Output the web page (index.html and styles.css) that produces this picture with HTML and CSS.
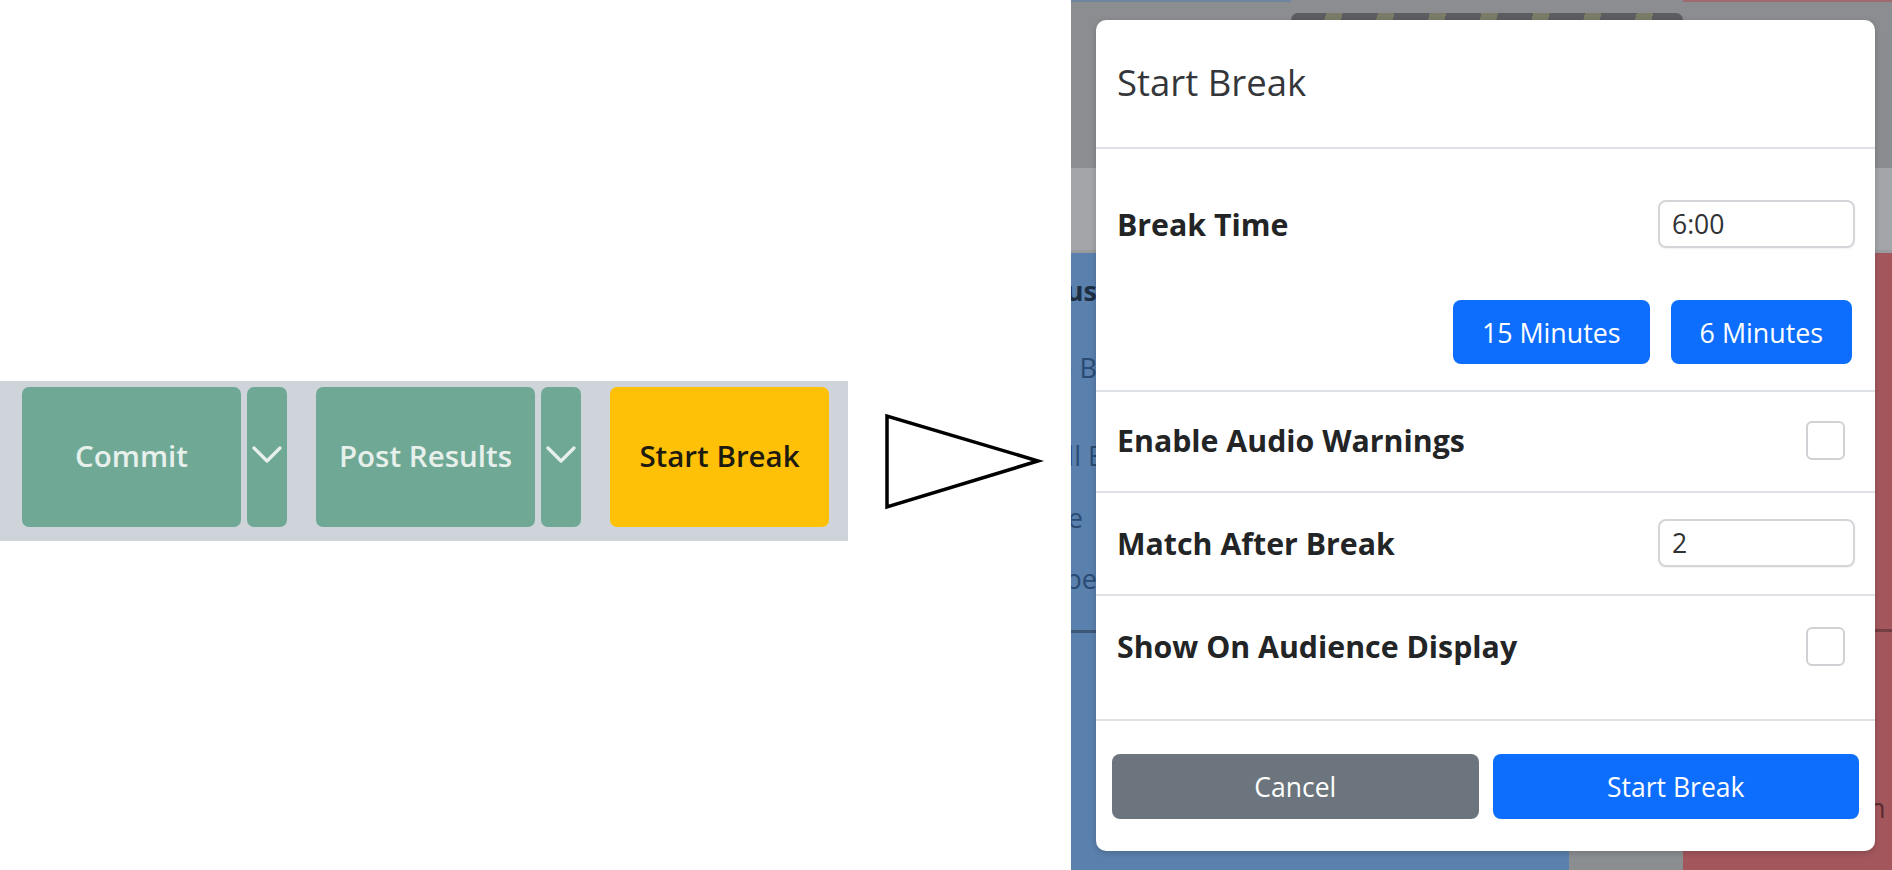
FILE: index.html
```html
<!DOCTYPE html>
<html lang="en">
<head>
<meta charset="utf-8">
<title>Start Break</title>
<link rel="stylesheet" href="styles.css">
</head>
<body>
<div class="page">
  <section class="left">
    <div class="toolbar">
      <button class="tb-btn tb-green tb-main">Commit</button>
      <button class="tb-btn tb-green tb-drop" aria-label="More">
        <svg width="30" height="18" viewBox="0 0 30 18"><polyline points="2,2 15,15 28,2" fill="none" stroke="#e7f0eb" stroke-width="3.2" stroke-linecap="round" stroke-linejoin="round"/></svg>
      </button>
      <button class="tb-btn tb-green tb-main tb-gap">Post Results</button>
      <button class="tb-btn tb-green tb-drop" aria-label="More">
        <svg width="30" height="18" viewBox="0 0 30 18"><polyline points="2,2 15,15 28,2" fill="none" stroke="#e7f0eb" stroke-width="3.2" stroke-linecap="round" stroke-linejoin="round"/></svg>
      </button>
      <button class="tb-btn tb-yellow tb-main tb-gap">Start Break</button>
    </div>
  </section>

  <div class="arrow">
    <svg width="223" height="870" viewBox="0 0 223 870">
      <polygon points="39,416 39,507 190,461" fill="#ffffff" stroke="#000000" stroke-width="3.5" stroke-linejoin="miter"/>
    </svg>
  </div>

  <section class="backdrop">
    <div class="under">
      <div class="under-topline">
        <span class="tl-blue"></span><span class="tl-gray"></span><span class="tl-red"></span>
      </div>
      <div class="under-top">
        <div class="striped"></div>
      </div>
      <div class="under-band"></div>
      <div class="under-cols">
        <div class="col-blue">
          <div class="ul ul-1"><span>Status</span></div>
          <div class="ul ul-2"><span>to B</span></div>
          <div class="ul ul-3"><span>Fill E</span></div>
          <div class="ul ul-4"><span>e</span></div>
          <div class="ul ul-5"><span>Type</span></div>
          <div class="col-line"></div>
        </div>
        <div class="col-gray"></div>
        <div class="col-red">
          <div class="col-line red-line"></div>
          <div class="red-text">n</div>
        </div>
      </div>
    </div>

    <div class="modal">
      <header class="modal-header">
        <h5 class="modal-title">Start Break</h5>
      </header>
      <div class="modal-body">
        <div class="section first">
          <div class="row">
            <label class="lbl">Break Time</label>
            <input class="field" type="text" value="6:00">
          </div>
          <div class="presets">
            <button class="btn btn-primary preset">15 Minutes</button>
            <button class="btn btn-primary preset">6 Minutes</button>
          </div>
        </div>
        <div class="section s2">
          <div class="row">
            <label class="lbl">Enable Audio Warnings</label>
            <span class="check"></span>
          </div>
        </div>
        <div class="section s3">
          <div class="row">
            <label class="lbl">Match After Break</label>
            <input class="field" type="text" value="2">
          </div>
        </div>
        <div class="section last">
          <div class="row">
            <label class="lbl">Show On Audience Display</label>
            <span class="check"></span>
          </div>
        </div>
      </div>
      <footer class="modal-footer">
        <button class="btn btn-secondary">Cancel</button>
        <button class="btn btn-primary">Start Break</button>
      </footer>
    </div>
  </section>
</div>
</body>
</html>
```

FILE: styles.css
```css
* { box-sizing: border-box; }
html, body { margin: 0; padding: 0; background: #ffffff; }
body { font-family: "Open Sans", "Noto Sans", sans-serif; width: 1892px; height: 870px; overflow: hidden; }

.page { display: flex; align-items: flex-start; width: 1892px; height: 870px; }

/* ---------- left toolbar ---------- */
.left { width: 848px; flex: none; padding-top: 381px; }
.toolbar {
  height: 160px;
  background: #cfd4da;
  display: flex;
  align-items: flex-start;
  padding: 6px 0 0 22px;
  gap: 6px;
}
.tb-btn {
  height: 140px;
  border: none;
  border-radius: 7px;
  font-family: "Open Sans", sans-serif;
  font-size: 29.5px;
  font-weight: 600;
  letter-spacing: 0;
  display: flex;
  align-items: center;
  justify-content: center;
  padding: 0 0 4px;
}
.tb-green { background: #6fa996; color: #e7f0eb; }
.tb-yellow { background: #ffc107; color: #1d1a10; }
.tb-main { width: 219px; }
.tb-drop { width: 40px; }
.tb-gap { margin-left: 23px; }

.arrow { width: 223px; flex: none; height: 870px; }
.arrow svg { display: block; }

/* ---------- backdrop (page underneath) ---------- */
.backdrop {
  position: relative;
  flex: 1;
  height: 870px;
  overflow: hidden;
  background: #8b8d90;
}
.under { display: flex; flex-direction: column; height: 870px; }
.under-topline { display: flex; height: 2px; }
.tl-blue { width: 220px; background: #6f86a3; }
.tl-gray { width: 392px; background: #8b8d90; }
.tl-red { flex: 1; background: #9d6a6e; }
.under-top { height: 166px; padding: 11px 0 0 220px; }
.striped {
  width: 392px;
  height: 14px;
  border-radius: 7px;
  background: repeating-linear-gradient(105deg, #5b5d60 0 34px, #7b7c68 34px 50px);
}
.under-band { height: 85px; background: #a3a5a8; border-bottom: 3px solid #999b9e; }
.under-cols { flex: 1; display: flex; }
.col-blue {
  width: 498px;
  background: #5a80ad;
  color: #2b4b74;
  font-size: 27px;
  line-height: 36px;
  white-space: nowrap;
  display: flex;
  flex-direction: column;
  padding-top: 20px;
}
.ul { display: flex; justify-content: flex-end; font-family: "Open Sans", sans-serif; }
.ul-1 { width: 26px; font-weight: 700; color: #1e2f45; }
.ul-2 { width: 26px; margin-top: 41px; }
.ul-3 { width: 32px; margin-top: 52px; }
.ul-4 { width: 12px; margin-top: 26px; }
.ul-5 { width: 26px; margin-top: 25px; }
.col-line { height: 3px; background: #3d5775; margin-top: 33px; width: 100%; }
.col-gray { width: 114px; background: #8b8e91; }
.col-red { flex: 1; background: #a3575d; padding-top: 376px; }
.red-line { background: #743e43; margin-top: 0; }
.red-text { color: #5b2a2e; font-size: 27px; margin-top: 161px; padding-left: 186px; line-height: 30px; }

/* ---------- modal ---------- */
.modal {
  position: absolute;
  left: 25px;
  top: 20px;
  width: 779px;
  height: 831px;
  background: #ffffff;
  border-radius: 10px;
  box-shadow: 0 2px 6px rgba(0,0,0,0.18);
  display: flex;
  flex-direction: column;
  overflow: hidden;
}
.modal-header {
  height: 129px;
  border-bottom: 2px solid #dee2e6;
  display: flex;
  align-items: center;
  padding: 0 21px 4px;
}
.modal-title {
  margin: 0;
  font-size: 36.5px;
  font-weight: 400;
  color: #34363a;
  letter-spacing: 0;
}
.modal-body { display: flex; flex-direction: column; }
.section { border-top: 2px solid #dee2e6; }
.section.first { border-top: none; padding: 24px 0 26px; height: 241px; }
.section.s2 { height: 101px; }
.section.s3 { height: 103px; }
.section.last { height: 125px; padding-bottom: 23px; }
.row {
  height: 100px;
  display: flex;
  align-items: center;
  justify-content: space-between;
  padding: 0 20px 0 21px;
}
.section.first .row { height: 102px; }
.section.s2 .row { padding-bottom: 3px; }
.lbl {
  font-size: 30.3px;
  font-weight: 700;
  color: #222426;
  letter-spacing: 0;
}
.field {
  width: 197px;
  height: 48px;
  border: 2px solid #d3d5d8;
  border-radius: 8px;
  padding: 0 12px;
  font-family: "Open Sans", sans-serif;
  font-size: 26.5px;
  color: #303234;
  background: #ffffff;
  box-shadow: 0 1px 2px rgba(0,0,0,0.06);
  outline: none;
}
.check {
  width: 39px;
  height: 39px;
  border: 2px solid #cfd1d4;
  border-radius: 6px;
  margin-right: 10px;
  background: #fff;
}
.presets {
  display: flex;
  justify-content: flex-end;
  gap: 21px;
  margin-top: 25px;
  padding-right: 23px;
}
.btn {
  border: none;
  border-radius: 8px;
  font-family: "Open Sans", sans-serif;
  font-size: 26.5px;
  font-weight: 400;
  color: #ffffff;
  letter-spacing: 0;
  padding: 0;
}
.btn-primary { background: #0d6efd; }
.btn-secondary { background: #6c757d; }
.preset { height: 64px; padding: 0 29px; font-size: 26.8px; }
.modal-footer {
  border-top: 2px solid #dee2e6;
  flex: 1;
  display: grid;
  grid-template-columns: 1fr 1fr;
  gap: 14px;
  padding: 33px 16px 0;
  align-content: start;
}
.modal-footer .btn { height: 65px; }
```
